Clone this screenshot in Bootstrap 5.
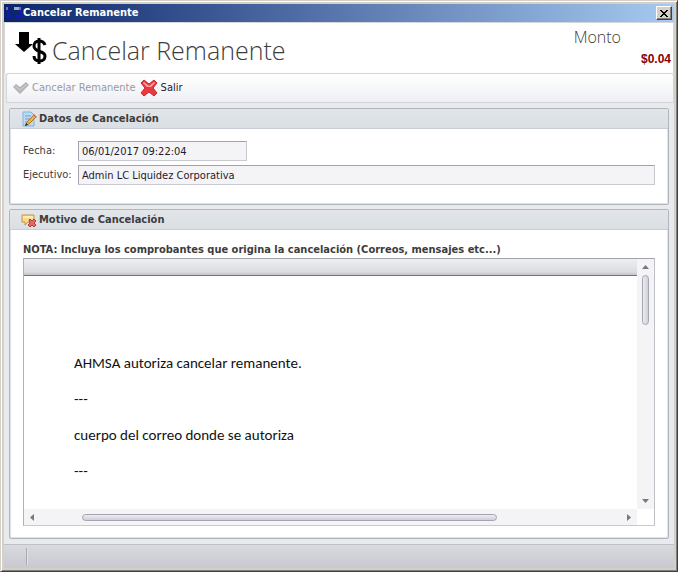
<!DOCTYPE html>
<html lang="es">
<head>
<meta charset="utf-8">
<meta name="viewport" content="width=device-width, initial-scale=1">
<title>Cancelar Remanente</title>
<link href="https://cdn.jsdelivr.net/npm/bootstrap@5.3.0/dist/css/bootstrap.min.css" rel="stylesheet">
<style>
body{font-family:"DejaVu Sans Condensed","DejaVu Sans",sans-serif;font-size:11px;line-height:16px;color:#3c3c3c;background:#d4d0c8}
svg{display:block;flex:none}
.app-window{background:#d4d0c8;border:1px solid;border-color:#d4d0c8 #404040 #404040 #d4d0c8;box-shadow:inset 1px 1px #fff,inset -1px -1px #808080;padding:3px}
.client-area{background:#e8eaed}
.caption-bar{height:18px;padding:0 2px 0 1px;background:linear-gradient(90deg,#0a246a,#a6caf0);color:#fff;font-weight:700}
.close-btn{width:16px;height:14px;padding:0;border:1px solid;border-color:#fff #404040 #404040 #fff;background:#d4d0c8;box-shadow:inset -1px -1px #808080}
.heading-area{height:51px;background:#fff;border:1px solid #d6d6da;border-width:1px 1px 0;padding:0 2px 0 10px}
.page-title{font:300 25px/40px "Open Sans",sans-serif;color:#3c3c3c;padding-top:4px}
.amount-label{font:300 16px/20px "Open Sans",sans-serif;color:#3c3c3c;margin-right:50px}
.amount{font:700 12px/16px "Liberation Sans",sans-serif;color:#8b0000}
.tool-strip{height:30px;margin-left:2px;padding:0 6px;background:linear-gradient(#fff,#eff0f4);border:1px solid #d2d4d9;border-radius:3px 3px 0 0}
.tool-btn{background:none;border:0;padding:0;gap:3px;color:#1e1b2e}
.tool-btn:disabled{color:#9a99a3}
.content-area{padding:5px;gap:4px}
.panel{background:#fff;border:1px solid #b0b6be;border-radius:2px;box-shadow:inset -1px -1px #dfe3e7,inset 1px 0 #dfe3e7}
.panel-head{height:20px;margin:0;padding:0 11px;gap:2px;background:linear-gradient(#e2e6e9,#dadfe4);border-bottom:1px solid #c9ced5;font-size:11px;line-height:19px;font-weight:700}
.panel-inner{padding:12px 13px}
.data-panel .panel-inner{padding-bottom:19px}
.field-label{width:55px}
.field-box{height:20px;min-width:0;padding:0 3px;border:1px solid;border-color:#a3a2b1 #c9c9d2 #c9c9d2 #a3a2b1;background:#f4f4f7;color:#1e1b2e}
.date-box{width:169px}
.editor{border:1px solid;border-color:#a3a2aa #c0c0c8 #c9c9d2 #b0b0b8}
.ruler{height:17px;background:linear-gradient(#eceef1,#dcdde1 80%,#c4c4c8);border-bottom:1px solid #77777b}
.doc{padding:77px 50px 0;font:15px/20px Carlito,Lato,sans-serif;color:#111}
.doc p{margin:0 0 16px}
.doc p:last-child{margin:0}
.vbar{width:17px;background:#f4f4f6;padding:6px 0}
.hbar{height:16px;background:#f4f4f6;padding:0 6px}
.corner{width:17px}
.vthumb{width:7px;height:50px;margin-top:6px;border:1px solid #a4a4b2;border-radius:4px;background:linear-gradient(90deg,#ececf0,#cfcfd8)}
.hthumb{height:7px;width:69%;border:1px solid #a4a4b2;border-radius:4px;background:linear-gradient(#ececf0,#cfcfd8)}
.hgap{width:48px}
.status{height:24px;border-top:1px solid #bfc1ca;background:linear-gradient(#d9dadf,#c8c8cf);padding:3px 22px}
.status-sep{width:2px;height:17px;background:linear-gradient(90deg,#a9a9b2 50%,#e2e2e7 50%)}
</style>
<script src="https://cdn.jsdelivr.net/npm/bootstrap@5.3.0/dist/js/bootstrap.bundle.min.js"></script>
</head>
<body>
<div class="app-window d-flex flex-column min-vh-100">
  <div class="caption-bar d-flex align-items-center">
    <svg width="18" height="14" viewBox="0 0 18 14"><path d="M3 3v7h3M11 10h4V4" fill="none" stroke="#1b12c4" stroke-width="2"/><path d="M1 1h2v3H1zM14 1h2v3h-2z" fill="#6a6eb0"/><path d="M9 1h5v3H9z" fill="#a9abc4"/></svg>
    <span>Cancelar Remanente</span>
    <button type="button" class="close-btn ms-auto" aria-label="Cerrar"><svg width="13" height="11" viewBox="0 0 13 11" shape-rendering="crispEdges"><path d="M3 2h2v1h1v1h2V3h1V2h2v1h-1v1H9v1H8v1h1v1h1v1h1v1H9V8H8V7H6v1H5v1H3V8h1V7h1V6h1V5H5V4H4V3H3z"/></svg></button>
  </div>
  <div class="client-area d-flex flex-column flex-grow-1">
  <header class="heading-area d-flex justify-content-between">
    <div class="d-flex align-items-center">
      <svg width="37" height="36" viewBox="0 0 37 36"><path d="M4 2h10v12h4l-9 8-9-8h4z"/><path d="M30 15c-1-3-3-4-6-4-3 0-5 2-5 5 0 7 11 4 11 10 0 3-2 5-5 5-4 0-6-2-6-5M24 8v26" fill="none" stroke="#000" stroke-width="3"/></svg>
      <h1 class="page-title mb-0">Cancelar Remanente</h1>
    </div>
    <div class="text-end pt-1">
      <div class="amount-label">Monto</div>
      <div class="amount mt-1">$0.04</div>
    </div>
  </header>
  <div class="tool-strip d-flex align-items-center">
    <button type="button" class="tool-btn d-flex align-items-center" disabled><svg width="16" height="16" viewBox="0 0 16 16"><path d="M0 7l3-3 4 3 6-5 3 3-9 9z" fill="#b3b3b3"/><path d="M2 7l1-1 4 3 6-5 1 1-7 6z" fill="#c9c9c9"/></svg>Cancelar Remanente</button>
    <button type="button" class="tool-btn d-flex align-items-center ms-1"><svg width="18" height="18" viewBox="0 0 18 18"><path d="M1 4l3-3 5 4 5-4 3 3-4 5 4 5-3 3-5-4-5 4-3-3 4-5z" fill="#e83a3f" stroke="#c42a30" stroke-linejoin="round"/><path d="M3 4l1-1 5 4 5-4 1 1-4 4H7z" fill="#f7a3a3"/></svg>Salir</button>
  </div>
  <main class="content-area d-flex flex-column flex-grow-1">
    <section class="panel data-panel">
      <h2 class="panel-head d-flex align-items-center"><svg width="16" height="16" viewBox="0 0 16 16"><path d="M2 1h8l3 3v11H2z" fill="#b8dcf5" stroke="#7db3dc"/><path d="M4 5h6M4 8h5M4 11h3" stroke="#6f9fc9"/><path d="M5 14l1-3 7-7 2 2-7 7z" fill="#f4b04a" stroke="#a87428"/><path d="M13 3l3 3-1 1-3-3z" fill="#c9705c"/><path d="M4 15l1-3 2 2z" fill="#222"/></svg>Datos de Cancelación</h2>
      <div class="panel-inner">
        <div class="d-flex align-items-center mb-1"><label class="field-label" for="fecha">Fecha:</label><input id="fecha" class="field-box date-box" value="06/01/2017 09:22:04" readonly></div>
        <div class="d-flex align-items-center"><label class="field-label" for="ejec">Ejecutivo:</label><input id="ejec" class="field-box flex-grow-1" value="Admin LC Liquidez Corporativa" readonly></div>
      </div>
    </section>
    <section class="panel flex-grow-1 d-flex flex-column">
      <h2 class="panel-head d-flex align-items-center"><svg width="16" height="16" viewBox="0 0 16 16"><path d="M1 3h12v7H7l-3 3v-3H1z" fill="#f9d88c" stroke="#c4953c"/><path d="M2 4h10v2H2z" fill="#fdeab4"/><path d="M8 8l1-1 2 2 2-2 2 2-2 2 2 2-2 2-2-2-2 2-2-2 2-2z" fill="#e26a64" stroke="#b53c38"/></svg>Motivo de Cancelación</h2>
      <div class="panel-inner d-flex flex-column flex-grow-1">
        <div class="fw-bold">NOTA: Incluya los comprobantes que origina la cancelación (Correos, mensajes etc...)</div>
        <div class="editor flex-grow-1 d-flex flex-column">
          <div class="d-flex flex-grow-1">
            <div class="flex-grow-1"><div class="ruler"></div>
              <div class="doc"><p>AHMSA autoriza cancelar remanente.</p><p>---</p><p>cuerpo del correo donde se autoriza</p><p>---</p></div>
            </div>
            <div class="vbar d-flex flex-column align-items-center">
              <svg width="7" height="4" viewBox="0 0 14 8"><path d="M0 8L7 0l7 8z" fill="#777586"/></svg><div class="vthumb"></div>
              <svg class="mt-auto" width="7" height="4" viewBox="0 0 14 8"><path d="M0 0h14L7 8z" fill="#777586"/></svg>
            </div>
          </div>
          <div class="d-flex"><div class="hbar flex-grow-1 d-flex align-items-center"><svg width="4" height="7" viewBox="0 0 8 14"><path d="M8 0v14L0 7z" fill="#777586"/></svg><div class="hgap"></div><div class="hthumb"></div><svg class="ms-auto" width="4" height="7" viewBox="0 0 8 14"><path d="M0 0v14l8-7z" fill="#777586"/></svg></div><div class="corner"></div></div>
        </div>
      </div>
    </section>
  </main>
  <footer class="status"><div class="status-sep"></div></footer>
  </div>
</div>
</body>
</html>
